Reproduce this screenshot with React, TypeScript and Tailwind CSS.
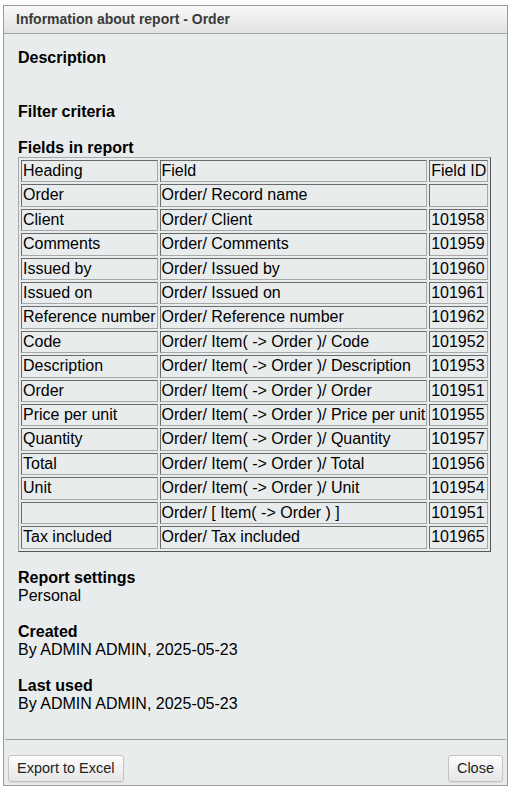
const rows: [string, string, string][] = [
  ["Order", "Order/ Record name", ""],
  ["Client", "Order/ Client", "101958"],
  ["Comments", "Order/ Comments", "101959"],
  ["Issued by", "Order/ Issued by", "101960"],
  ["Issued on", "Order/ Issued on", "101961"],
  ["Reference number", "Order/ Reference number", "101962"],
  ["Code", "Order/ Item( -> Order )/ Code", "101952"],
  ["Description", "Order/ Item( -> Order )/ Description", "101953"],
  ["Order", "Order/ Item( -> Order )/ Order", "101951"],
  ["Price per unit", "Order/ Item( -> Order )/ Price per unit", "101955"],
  ["Quantity", "Order/ Item( -> Order )/ Quantity", "101957"],
  ["Total", "Order/ Item( -> Order )/ Total", "101956"],
  ["Unit", "Order/ Item( -> Order )/ Unit", "101954"],
  ["", "Order/ [ Item( -> Order ) ]", "101951"],
  ["Tax included", "Order/ Tax included", "101965"],
];

const cell =
  "border border-t-[#6b6b6b] border-l-[#6b6b6b] border-b-[#a8a8a8] border-r-[#a8a8a8] px-px py-px text-left font-normal whitespace-nowrap";

function Button({ label }: { label: string }) {
  return (
    <button className="h-[27px] px-[8px] rounded-[3px] border border-[#c4c4c4] bg-gradient-to-b from-[#fdfdfd] to-[#e6e6e6] text-[14.5px] text-[#222] shadow-[0_1px_1px_rgba(0,0,0,0.08)]">
      {label}
    </button>
  );
}

export default function App() {
  return (
    <div className="min-h-screen bg-white pt-[5px] pl-[3px] pr-px font-['Liberation_Sans',Arial,sans-serif]">
      <div className="h-[781px] border border-[#9a9a9a] bg-[#e9eced] flex flex-col">
        <div className="h-[28px] border-b border-[#a6a6a6] bg-gradient-to-b from-[#f8f8f8] to-[#e2e2e2] flex items-center pl-3 text-[14px] font-bold text-[#3a3a3a]">
          Information about report - Order
        </div>

        <div className="flex-1 pl-[14px] pt-[15px] text-[16px] leading-[18px] text-black">
          <div className="font-bold">Description</div>
          <div className="h-[36px]" />
          <div className="font-bold">Filter criteria</div>
          <div className="h-[18px]" />
          <div className="font-bold">Fields in report</div>
          <table className="border-separate border-spacing-[2px] border border-t-[#a8a8a8] border-l-[#a8a8a8] border-b-[#555] border-r-[#555] leading-[18.4px]">
            <thead>
              <tr>
                <th className={cell}>Heading</th>
                <th className={cell}>Field</th>
                <th className={cell}>Field ID</th>
              </tr>
            </thead>
            <tbody>
              {rows.map((r, i) => (
                <tr key={i}>
                  <td className={cell}>{r[0]}</td>
                  <td className={cell}>{r[1]}</td>
                  <td className={cell}>{r[2]}</td>
                </tr>
              ))}
            </tbody>
          </table>

          <div className="mt-[17px] font-bold">Report settings</div>
          <div>Personal</div>
          <div className="mt-[18px] font-bold">Created</div>
          <div>By ADMIN ADMIN, 2025-05-23</div>
          <div className="mt-[18px] font-bold">Last used</div>
          <div>By ADMIN ADMIN, 2025-05-23</div>
        </div>

        <div className="mx-px border-t border-[#a0a0a0] flex justify-between items-center px-[3px] pt-[15px] pb-[3px]">
          <Button label="Export to Excel" />
          <Button label="Close" />
        </div>
      </div>
    </div>
  );
}
